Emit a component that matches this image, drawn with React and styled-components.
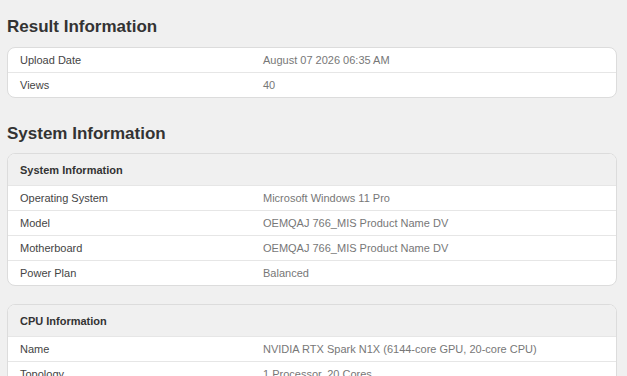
import React from 'react'
import styled, { createGlobalStyle } from 'styled-components'

const GlobalStyle = createGlobalStyle`
  html, body {
    margin: 0;
    padding: 0;
    background: #f0f0f0;
    font-family: "Liberation Sans", Arial, sans-serif;
  }
`

const Page = styled.div`
  padding: 17px 10px 0 7px;
  width: 610px;
`

const Heading = styled.h2`
  font-size: 17px;
  line-height: 20px;
  font-weight: bold;
  color: #333;
  margin: ${({first}) => first ? '0 0 10px' : '26px 0 9px'};
`

const Card = styled.div`
  background: #fff;
  border: 1px solid #dcdcdc;
  border-radius: 8px;
  overflow: hidden;
  margin-bottom: 18px;
`

const CardHeader = styled.div`
  height: 31px;
  display: flex;
  align-items: center;
  padding: 0 12px;
  background: #f0f0f0;
  font-size: 11px;
  font-weight: bold;
  color: #333;
`

const Row = styled.div`
  box-sizing: border-box;
  display: grid;
  grid-template-columns: 243px 1fr;
  align-items: center;
  height: ${({first}) => first ? '24px' : '25px'};
  padding: 0 12px;
  font-size: 11px;
  border-top: ${({first}) => first ? 'none' : '1px solid #e6e6e6'};
`

const Label = styled.span`
  color: #444;
`

const Value = styled.span`
  color: #777;
`

function InfoCard({title, rows}) {
  return (
    <Card>
      {title && <CardHeader>{title}</CardHeader>}
      {rows.map(([label, value], i) => (
        <Row key={label} first={!title && i === 0 ? 1 : undefined}>
          <Label>{label}</Label>
          <Value>{value}</Value>
        </Row>
      ))}
    </Card>
  )
}

export default function App() {
  return (
    <Page>
      <GlobalStyle />
      <Heading first>Result Information</Heading>
      <InfoCard rows={[
        ['Upload Date', 'August 07 2026 06:35 AM'],
        ['Views', '40'],
      ]} />
      <Heading>System Information</Heading>
      <InfoCard title="System Information" rows={[
        ['Operating System', 'Microsoft Windows 11 Pro'],
        ['Model', 'OEMQAJ 766_MIS Product Name DV'],
        ['Motherboard', 'OEMQAJ 766_MIS Product Name DV'],
        ['Power Plan', 'Balanced'],
      ]} />
      <InfoCard title="CPU Information" rows={[
        ['Name', 'NVIDIA RTX Spark N1X (6144-core GPU, 20-core CPU)'],
        ['Topology', '1 Processor, 20 Cores'],
      ]} />
    </Page>
  )
}
